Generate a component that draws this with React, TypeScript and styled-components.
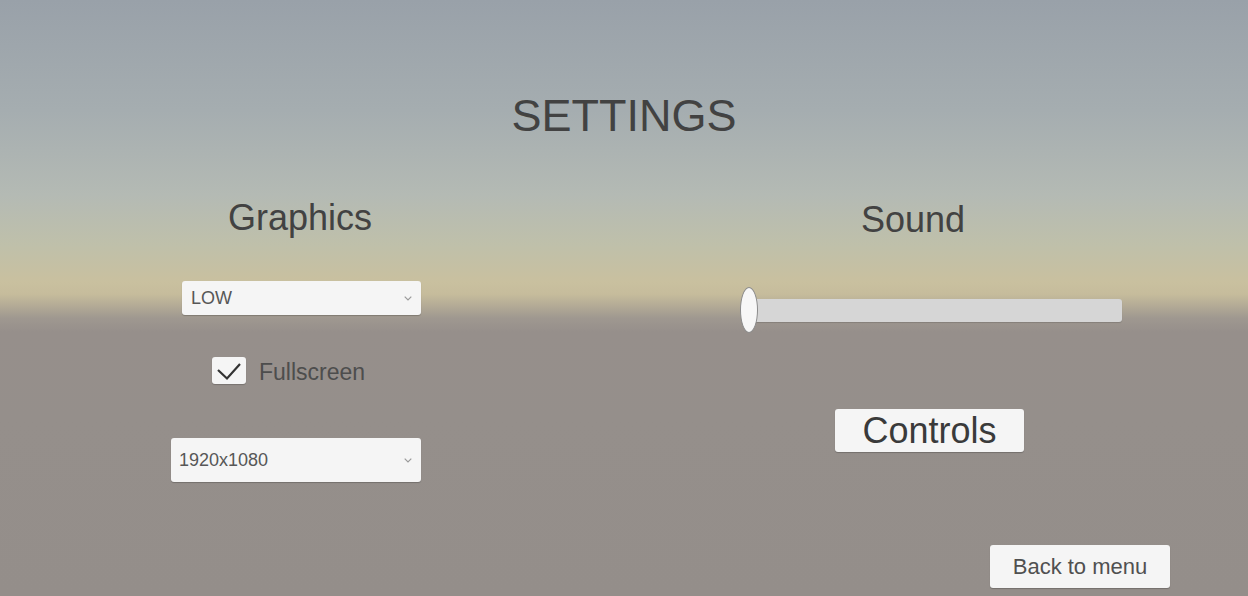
import React from "react";
import styled, { createGlobalStyle } from "styled-components";

const Global = createGlobalStyle`
  html, body { margin: 0; padding: 0; }
  body { font-family: "Liberation Sans", Arial, sans-serif; }
`;

const Screen = styled.div`
  width: 1248px;
  height: 596px;
  overflow: hidden;
  display: flex;
  flex-direction: column;
  background: linear-gradient(
    to bottom,
    #99a1a9 0px,
    #a5adb0 110px,
    #b4bab4 195px,
    #bfc0aa 245px,
    #c9c09f 282px,
    #c6bc9c 294px,
    #b3aa96 306px,
    #9f9890 318px,
    #968f8b 332px,
    #958f8b 420px,
    #948e8a 596px
  );
  color: #3f3f3f;
`;

const Title = styled.h1`
  margin: 93px 0 0;
  font-size: 45px;
  line-height: 1;
  font-weight: 400;
  text-align: center;
  color: #424242;
`;

const Columns = styled.div`
  display: flex;
  margin-top: 62px;
`;

const Column = styled.div<{ $left: number; $width: number }>`
  margin-left: ${(p) => p.$left}px;
  width: ${(p) => p.$width}px;
  display: flex;
  flex-direction: column;
`;

const Heading = styled.h2<{ $shift?: number; $top?: number }>`
  margin: ${(p) => p.$top ?? 0}px 0 0;
  font-size: 36px;
  line-height: 1;
  font-weight: 400;
  text-align: center;
  color: #424242;
  transform: translateX(${(p) => p.$shift ?? 0}px);
`;

const Dropdown = styled.div<{ $width: number; $height: number; $top: number; $pad: number }>`
  align-self: flex-end;
  margin-top: ${(p) => p.$top}px;
  width: ${(p) => p.$width}px;
  height: ${(p) => p.$height}px;
  box-sizing: border-box;
  padding: 0 9px 0 ${(p) => p.$pad}px;
  display: flex;
  align-items: center;
  justify-content: space-between;
  background: #f5f5f5;
  border-radius: 3px;
  box-shadow: 0 1px 1px rgba(0, 0, 0, 0.22);
  font-size: 18px;
  color: #575757;
`;

const Chevron = () => (
  <svg width="8" height="5" viewBox="0 0 8 5">
    <path d="M0.7 0.7 L4 4 L7.3 0.7" fill="none" stroke="#9a9a9a" strokeWidth="1.2" />
  </svg>
);

const ToggleRow = styled.label`
  margin: 42px 0 0 41px;
  display: flex;
  align-items: center;
  gap: 13px;
`;

const Box = styled.span`
  width: 34px;
  height: 27px;
  flex: none;
  display: flex;
  background: #f5f5f5;
  border-radius: 3px;
  box-shadow: 0 1px 1px rgba(0, 0, 0, 0.2);
`;

const ToggleText = styled.span`
  font-size: 23px;
  line-height: 1;
  padding-top: 3px;
  color: #4d4d4d;
`;

const SliderWrap = styled.div`
  position: relative;
  margin-top: 49px;
  height: 46px;
  display: flex;
  align-items: center;
`;

const Track = styled.div`
  margin-left: 8px;
  width: 374px;
  height: 23px;
  background: #d6d6d6;
  border-radius: 3px;
  box-shadow: 0 1px 1px rgba(0, 0, 0, 0.15);
`;

const Handle = styled.div`
  position: absolute;
  left: 0;
  top: 0;
  width: 16px;
  height: 44px;
  border-radius: 50%;
  background: #f7f7f7;
  border: 1px solid #8a8a8a;
`;

const Button = styled.button<{ $w: number; $size: number; $top?: number; $left?: number; $color: string }>`
  margin: ${(p) => p.$top ?? 0}px 0 0 ${(p) => p.$left ?? 0}px;
  width: ${(p) => p.$w}px;
  height: 43px;
  padding: 0;
  border: none;
  border-radius: 3px;
  background: #f5f5f5;
  box-shadow: 0 1px 1px rgba(0, 0, 0, 0.22);
  font-family: "Liberation Sans", Arial, sans-serif;
  font-size: ${(p) => p.$size}px;
  line-height: 1;
  color: ${(p) => p.$color};
  display: flex;
  align-items: center;
  justify-content: center;
`;

const Footer = styled.div`
  margin-top: auto;
  padding: 0 78px 8px 0;
  display: flex;
  justify-content: flex-end;
`;

export default function App() {
  return (
    <>
      <Global />
      <Screen>
        <Title>SETTINGS</Title>
        <Columns>
          <Column $left={171} $width={250}>
            <Heading $shift={4}>Graphics</Heading>
            <Dropdown $width={239} $height={34} $top={45} $pad={9}>
              <span>LOW</span>
              <Chevron />
            </Dropdown>
            <ToggleRow>
              <Box>
                <svg width="34" height="27" viewBox="0 0 34 27">
                  <path d="M6 13 L15 21.5 L28 7" fill="none" stroke="#333" strokeWidth="2.2" />
                </svg>
              </Box>
              <ToggleText>Fullscreen</ToggleText>
            </ToggleRow>
            <Dropdown $width={250} $height={44} $top={54} $pad={8}>
              <span>1920x1080</span>
              <Chevron />
            </Dropdown>
          </Column>
          <Column $left={319} $width={382}>
            <Heading $shift={-18} $top={2}>Sound</Heading>
            <SliderWrap>
              <Track />
              <Handle />
            </SliderWrap>
            <Button $w={189} $size={36} $top={76} $left={95} $color="#3a3a3a">
              Controls
            </Button>
          </Column>
        </Columns>
        <Footer>
          <Button $w={180} $size={22} $color="#505050">
            Back to menu
          </Button>
        </Footer>
      </Screen>
    </>
  );
}
